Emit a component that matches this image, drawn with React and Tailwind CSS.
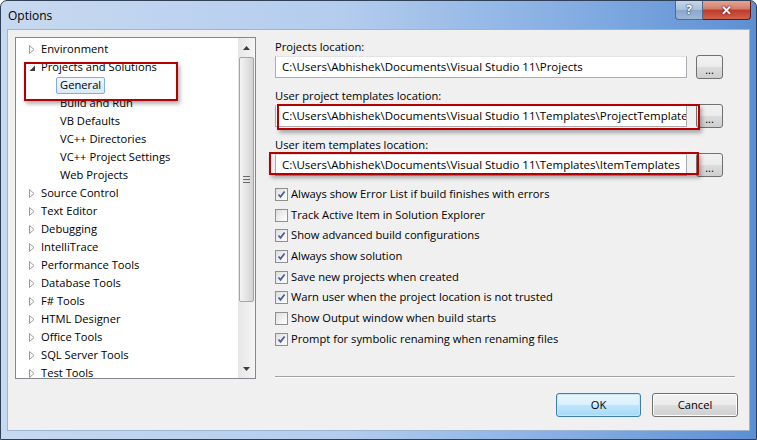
import { useState } from "react";

const treeItems = [
  { label: "Environment", level: 0, kind: "collapsed" },
  { label: "Projects and Solutions", level: 0, kind: "expanded" },
  { label: "General", level: 1, selected: true },
  { label: "Build and Run", level: 1 },
  { label: "VB Defaults", level: 1 },
  { label: "VC++ Directories", level: 1 },
  { label: "VC++ Project Settings", level: 1 },
  { label: "Web Projects", level: 1 },
  { label: "Source Control", level: 0, kind: "collapsed" },
  { label: "Text Editor", level: 0, kind: "collapsed" },
  { label: "Debugging", level: 0, kind: "collapsed" },
  { label: "IntelliTrace", level: 0, kind: "collapsed" },
  { label: "Performance Tools", level: 0, kind: "collapsed" },
  { label: "Database Tools", level: 0, kind: "collapsed" },
  { label: "F# Tools", level: 0, kind: "collapsed" },
  { label: "HTML Designer", level: 0, kind: "collapsed" },
  { label: "Office Tools", level: 0, kind: "collapsed" },
  { label: "SQL Server Tools", level: 0, kind: "collapsed" },
  { label: "Test Tools", level: 0, kind: "collapsed" },
];

const locations = [
  { label: "Projects location:", value: "C:\\Users\\Abhishek\\Documents\\Visual Studio 11\\Projects" },
  { label: "User project templates location:", value: "C:\\Users\\Abhishek\\Documents\\Visual Studio 11\\Templates\\ProjectTemplate" },
  { label: "User item templates location:", value: "C:\\Users\\Abhishek\\Documents\\Visual Studio 11\\Templates\\ItemTemplates" },
];

const initialChecks = [
  { label: "Always show Error List if build finishes with errors", on: true },
  { label: "Track Active Item in Solution Explorer", on: false },
  { label: "Show advanced build configurations", on: true },
  { label: "Always show solution", on: true },
  { label: "Save new projects when created", on: true },
  { label: "Warn user when the project location is not trusted", on: true },
  { label: "Show Output window when build starts", on: false },
  { label: "Prompt for symbolic renaming when renaming files", on: true },
];

const Expander = ({ kind }) => {
  if (kind === "expanded") {
    return (
      <svg width="7" height="7" viewBox="0 0 7 7" className="mt-[2px]">
        <path d="M6 0.5 L6 6 L0.5 6 Z" fill="#3c3c3c" />
      </svg>
    );
  }
  if (kind === "collapsed") {
    return (
      <svg width="6" height="9" viewBox="0 0 6 9">
        <path d="M0.5 0.5 L5 4.5 L0.5 8.5 Z" fill="#fff" stroke="#9a9a9a" strokeWidth="1" />
      </svg>
    );
  }
  return null;
};

const Checkbox = ({ on }) => (
  <span className="flex h-[13px] w-[13px] items-center justify-center border border-[#8e8f8f] bg-[linear-gradient(135deg,#dcdcdc,#ffffff)]">
    <span className="flex h-[9px] w-[9px] items-center justify-center bg-[linear-gradient(135deg,#e2e2e2,#fdfdfd)]">
      {on && (
        <svg width="9" height="9" viewBox="0 0 9 9">
          <path d="M1.5 4.5 L3.5 6.8 L7.6 1.5" fill="none" stroke="#4a5f97" strokeWidth="1.8" />
        </svg>
      )}
    </span>
  </span>
);

const DotsButton = () => (
  <button
    type="button"
    className="h-[24px] w-[27px] rounded-[3px] border border-[#707070] bg-[linear-gradient(#f2f2f2,#ebebeb_50%,#dddddd_50%,#cfcfcf)] pt-[4px] text-[11px] leading-none text-black"
  >
    ...
  </button>
);

export default function App() {
  const [checks, setChecks] = useState(initialChecks);

  return (
    <div
      className="relative h-[440px] w-[757px] overflow-hidden rounded-t-[7px] border border-[#2f4057] bg-[linear-gradient(to_right,#c7d9f0,#b4cdee_45%,#86aee3_75%,#5c8fd3)] text-[11.2px] text-black"
      style={{ fontFamily: '"Open Sans", "Noto Sans", sans-serif' }}
    >
      {/* title bar */}
      <div className="flex h-[28px] items-start justify-between pl-[7px]">
        <span className="mt-[7px] text-[12px] leading-[16px]">Options</span>
        <div className="mr-[5px] flex">
          <button
            type="button"
            className="flex h-[19px] w-[28px] items-center justify-center rounded-bl-[4px] border border-t-0 border-[#4d6a91] bg-[linear-gradient(#c8d6e8,#a9bfdb_50%,#8aa6cc_50%,#9fb8d9)] text-[12px] font-bold leading-none text-white"
            style={{ textShadow: "0 0 2px #1d2f4a, 0 0 1px #1d2f4a" }}
          >
            ?
          </button>
          <button
            type="button"
            className="flex h-[19px] w-[48px] items-center justify-center rounded-br-[4px] border border-l-0 border-t-0 border-[#5a1d16] bg-[linear-gradient(#e5a493,#d47e6a_45%,#c0392a_50%,#d0624a)] text-[13px] font-bold leading-none text-white"
            style={{ textShadow: "0 0 2px #4a1208, 0 0 1px #4a1208" }}
          >
            ✕
          </button>
        </div>
      </div>

      {/* client area */}
      <div className="mx-[6px] flex h-[402px] flex-col border border-[#9db4d3] bg-[#f0f0f0]">
        <div className="flex pl-[7px] pt-[7px]">
          {/* tree */}
          <div className="flex h-[342px] w-[241px] border border-[#828790] bg-white">
            <div className="flex-1 overflow-hidden pt-[2px]">
              {treeItems.map((item) => (
                <div key={item.label} className="flex h-[18px] items-center">
                  {item.level === 0 ? (
                    <>
                      <span className="ml-[13px] flex w-[12px] items-center">
                        <Expander kind={item.kind} />
                      </span>
                      <span className="whitespace-nowrap">{item.label}</span>
                    </>
                  ) : item.selected ? (
                    <span className="ml-[40px] flex h-[17px] items-center rounded-[2px] border border-[#84acdd] bg-[linear-gradient(#f1f7fe,#d8eafd)] px-[3px] whitespace-nowrap">
                      {item.label}
                    </span>
                  ) : (
                    <span className="ml-[44px] whitespace-nowrap">{item.label}</span>
                  )}
                </div>
              ))}
            </div>
            {/* scrollbar */}
            <div className="flex w-[17px] flex-col bg-[linear-gradient(to_right,#e6e6e6,#f5f5f5)]">
              <div className="flex h-[19px] items-center justify-center">
                <svg width="7" height="4" viewBox="0 0 7 4">
                  <path d="M3.5 0 L7 4 L0 4 Z" fill="#3c3c3c" />
                </svg>
              </div>
              <div className="mx-[1px] flex h-[245px] items-center justify-center rounded-[2px] border border-[#a4a4a4] bg-[linear-gradient(to_right,#f4f4f4,#e4e4e4_50%,#d2d2d2)]">
                <div className="flex flex-col gap-[2px]">
                  <span className="h-[1px] w-[7px] bg-[#6b6b6b]" />
                  <span className="h-[1px] w-[7px] bg-[#6b6b6b]" />
                  <span className="h-[1px] w-[7px] bg-[#6b6b6b]" />
                </div>
              </div>
              <div className="flex-1" />
              <div className="flex h-[19px] items-center justify-center">
                <svg width="7" height="4" viewBox="0 0 7 4">
                  <path d="M0 0 L7 0 L3.5 4 Z" fill="#3c3c3c" />
                </svg>
              </div>
            </div>
          </div>

          {/* settings */}
          <div className="ml-[19px] flex h-[342px] w-[460px] flex-col">
            {locations.map((loc, i) => (
              <div key={loc.label} className={i === 0 ? "mt-[2px]" : "mt-[9px]"}>
                <div className="h-[16px] leading-[16px]">{loc.label}</div>
                <div className="flex items-center">
                  <div className="flex h-[22px] w-[412px] items-center overflow-hidden border border-[#abadb3] border-t-[#e3e3e3] bg-white pl-[6px] text-[11.5px] whitespace-nowrap">
                    {loc.value}
                  </div>
                  <span className="ml-[9px]">
                    <DotsButton />
                  </span>
                </div>
              </div>
            ))}

            <div className="mt-[7px] flex flex-col">
              {checks.map((c, i) => (
                <label key={c.label} className="flex h-[20.7px] items-center gap-[3px]">
                  <span
                    onClick={() =>
                      setChecks((prev) => prev.map((p, j) => (j === i ? { ...p, on: !p.on } : p)))
                    }
                  >
                    <Checkbox on={c.on} />
                  </span>
                  <span className="whitespace-nowrap">{c.label}</span>
                </label>
              ))}
            </div>

            <div className="mt-auto mb-[1px] h-[2px] border-t border-b border-t-[#a0a0a0] border-b-white" />
          </div>
        </div>

        {/* footer buttons */}
        <div className="mt-[14px] flex justify-end gap-[11px] pr-[11px]">
          <button
            type="button"
            className="h-[24px] w-[85px] rounded-[3px] border border-[#3c7fb1] bg-[linear-gradient(#eaf6fd,#d9f0fc_50%,#bee6fd_50%,#a7d9f5)] shadow-[inset_0_0_0_1px_#c3e6fa]"
          >
            OK
          </button>
          <button
            type="button"
            className="h-[24px] w-[86px] rounded-[3px] border border-[#707070] bg-[linear-gradient(#f2f2f2,#ebebeb_50%,#dddddd_50%,#cfcfcf)] shadow-[inset_0_0_0_1px_#fcfcfc]"
          >
            Cancel
          </button>
        </div>
      </div>

      {/* red annotation boxes */}
      <div className="absolute left-[23px] top-[61px] h-[39px] w-[154px] border-2 border-[#b40000] shadow-[2px_3px_4px_rgba(0,0,0,0.3)]" />
      <div className="absolute left-[276px] top-[103px] h-[26px] w-[423px] border-2 border-[#b40000] shadow-[2px_3px_4px_rgba(0,0,0,0.3)]" />
      <div className="absolute left-[268px] top-[151px] h-[23px] w-[430px] border-2 border-[#b40000] shadow-[2px_3px_4px_rgba(0,0,0,0.3)]" />
    </div>
  );
}
